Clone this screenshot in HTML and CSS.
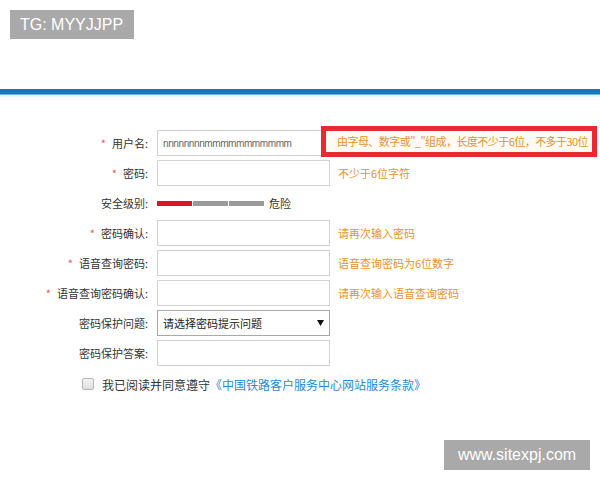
FILE: index.html
```html
<!DOCTYPE html>
<html lang="zh-CN">
<head>
<meta charset="utf-8">
<title>注册</title>
<link rel="stylesheet" href="styles.css">
</head>
<body>
<div class="top"><span class="tg">TG: MYYJJPP</span></div>
<div class="bar"></div>
<div class="reg">
  <div class="lbl"><span class="req">*</span>用户名:</div>
  <div class="field"><span class="val">nnnnnnnnmmmmmmmmmmm</span></div>
  <div class="hint hint-alert">由字母、数字或"_"组成，长度不少于6位，不多于30位</div>

  <div class="lbl"><span class="req">*</span>密码:</div>
  <div class="field"></div>
  <div class="hint">不少于6位字符</div>

  <div class="lbl">安全级别:</div>
  <div class="strength"><span class="seg seg-on"></span><span class="seg"></span><span class="seg"></span><span class="level">危险</span></div>
  <div></div>

  <div class="lbl"><span class="req">*</span>密码确认:</div>
  <div class="field"></div>
  <div class="hint">请再次输入密码</div>

  <div class="lbl"><span class="req">*</span>语音查询密码:</div>
  <div class="field"></div>
  <div class="hint">语音查询密码为6位数字</div>

  <div class="lbl"><span class="req">*</span>语音查询密码确认:</div>
  <div class="field"></div>
  <div class="hint">请再次输入语音查询密码</div>

  <div class="lbl">密码保护问题:</div>
  <div class="field select"><span>请选择密码提示问题</span><svg class="arrow" width="7" height="6" viewBox="0 0 7 6"><path d="M0 0H7L3.5 6Z" fill="#111"/></svg></div>
  <div></div>

  <div class="lbl">密码保护答案:</div>
  <div class="field"></div>
  <div></div>
</div>
<div class="agree"><span class="check"></span><span>我已阅读并同意遵守</span><span class="link">《中国铁路客户服务中心网站服务条款》</span></div>
<div class="wm">www.sitexpj.com</div>
</body>
</html>
```
FILE: styles.css
```css
html, body {
  margin: 0;
  padding: 0;
  background: #fff;
}
body {
  width: 600px;
  height: 480px;
  position: relative;
  overflow: hidden;
  font-family: "Noto Sans CJK SC", "Noto Sans", sans-serif;
  color: #333;
}
.top {
  height: 89px;
  box-sizing: border-box;
  padding: 10px 0 0 10px;
}
.tg {
  display: inline-block;
  background: #a9a9a9;
  color: #fff;
  font-family: "Liberation Sans", Arial, sans-serif;
  font-size: 16px;
  line-height: 29px;
  height: 29px;
  padding: 0 10px;
  width: 104px;
}
.bar {
  height: 5px;
  background: #1a77bb;
  border-bottom: 1px solid #6cb6de;
  box-shadow: 0 2px 0 #e6f7fb;
}
.reg {
  display: grid;
  grid-template-columns: 148px 173px 1fr;
  grid-auto-rows: 26px;
  row-gap: 4px;
  padding-top: 35px;
}
.lbl {
  font-size: 11px;
  line-height: 26px;
  text-align: right;
  white-space: nowrap;
}
.req {
  color: #e65a5a;
  margin-right: 6px;
  font-size: 11px;
}
.field {
  margin-left: 9px;
  width: 173px;
  height: 26px;
  box-sizing: border-box;
  border: 1px solid #d3d3d3;
  background: #fff;
  display: flex;
  align-items: center;
  padding-left: 5px;
}
.val {
  font-family: "Liberation Sans", Arial, sans-serif;
  font-size: 10px;
  color: #666;
  letter-spacing: -0.4px;
}
.hint {
  margin-left: 17px;
  font-size: 11px;
  line-height: 26px;
  color: #e8922e;
  white-space: nowrap;
}
.hint-alert {
  position: relative;
  z-index: 1;
  margin-left: 0;
  margin-top: -4px;
  height: 31px;
  width: 276px;
  box-sizing: border-box;
  border: 5px solid #ea2a30;
  background: #fffaf4;
  padding-left: 11px;
  line-height: 21px;
  font-size: 11px;
  letter-spacing: -0.55px;
  overflow: hidden;
}
.strength {
  margin-left: 9px;
  display: flex;
  align-items: center;
  gap: 1px;
}
.seg {
  width: 35px;
  height: 5px;
  background: #9a9a9a;
}
.seg-on {
  background: #e0141e;
}
.level {
  font-size: 11px;
  margin-left: 4px;
  color: #333;
}
.select {
  border-color: #a9a9a9;
  justify-content: space-between;
  padding-right: 5px;
  font-size: 11px;
  color: #222;
}
.arrow {
  display: block;
}
.agree {
  display: flex;
  align-items: center;
  padding-left: 82px;
  margin-top: 6px;
  height: 24px;
  font-size: 12px;
  color: #333;
}
.check {
  width: 10px;
  height: 10px;
  border: 1px solid #b5b5b5;
  border-radius: 2px;
  background: linear-gradient(#f4f4f4, #dedede);
  margin-right: 8px;
}
.link {
  color: #2a8ad4;
}
.wm {
  position: absolute;
  left: 444px;
  top: 440px;
  width: 146px;
  height: 30px;
  background: #a9a9a9;
  color: #fff;
  font-family: "Liberation Sans", Arial, sans-serif;
  font-size: 16px;
  line-height: 30px;
  text-align: center;
}
```
